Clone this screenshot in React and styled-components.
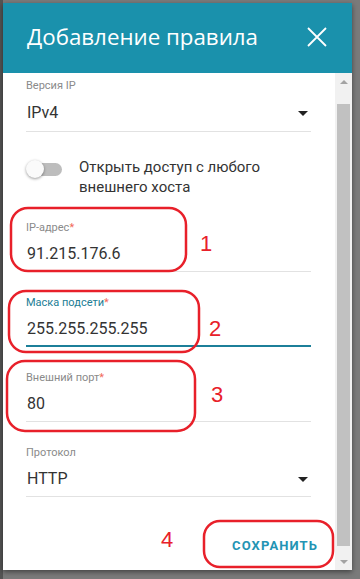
import React from "react";
import styled, { createGlobalStyle } from "styled-components";

const Global = createGlobalStyle`
  html, body { margin: 0; padding: 0; }
  body {
    width: 360px;
    height: 579px;
    overflow: hidden;
    background: #6f6f6f;
    font-family: Roboto, "Noto Sans", sans-serif;
  }
`;

const Page = styled.div`
  position: relative;
  width: 360px;
  height: 579px;
  padding: 3px 8px 9px 3px;
  box-sizing: border-box;
  background: linear-gradient(to right, #545454 0, #545454 3px, #7a7a7a 3px);
`;

const Dialog = styled.div`
  width: 349px;
  height: 567px;
  background: #fff;
  display: flex;
  flex-direction: column;
  box-shadow: 0 2px 5px rgba(0, 0, 0, 0.45);
`;

const Header = styled.div`
  height: 70px;
  flex: none;
  background: #1a91ac;
  display: flex;
  align-items: center;
  justify-content: space-between;
  padding: 0 25px 0 24px;
`;

const Title = styled.div`
  color: #fff;
  font-family: "Open Sans", "Noto Sans", sans-serif;
  font-size: 22.3px;
  line-height: 30px;
  margin-top: -2px;
`;

const CloseBtn = styled.div`
  width: 20px;
  height: 20px;
  display: flex;
  margin-top: -2px;
`;

const Body = styled.div`
  flex: 1;
  display: flex;
  min-height: 0;
`;

const Content = styled.div`
  flex: 1;
  display: flex;
  flex-direction: column;
`;

const Form = styled.div`
  display: flex;
  flex-direction: column;
  gap: 24px;
  padding: 6px 24px 0 23px;
`;

const Field = styled.div`
  display: flex;
  flex-direction: column;
  padding-bottom: ${(p) => (p.$focused ? 6 : p.$tall ? 8 : 7)}px;
  border-bottom: ${(p) => (p.$focused ? "2px solid #1c7f99" : "1px solid #e2e2e2")};
`;

const Label = styled.div`
  font-size: 11px;
  line-height: 14px;
  color: ${(p) => (p.$focused ? "#217d95" : "#8a8a8a")};
`;

const Star = styled.span`
  color: #f26a5a;
`;

const ValueRow = styled.div`
  display: flex;
  align-items: center;
  justify-content: space-between;
  margin-top: ${(p) => (p.$tall ? 10 : 9)}px;
  height: 20px;
`;

const Value = styled.div`
  font-size: 16px;
  line-height: 20px;
  color: #333;
  padding-left: 1px;
`;

const Caret = styled.div`
  width: 0;
  height: 0;
  border-left: 5px solid transparent;
  border-right: 5px solid transparent;
  border-top: 5px solid #222;
  margin-right: 3px;
`;

const ToggleRow = styled.div`
  display: flex;
  align-items: flex-start;
  margin-top: 1px;
`;

const SwitchBox = styled.div`
  width: 52px;
  flex: none;
  padding-top: 3px;
  padding-left: 1px;
`;

const Track = styled.div`
  position: relative;
  width: 35px;
  height: 13px;
  margin-top: 3px;
  border-radius: 7px;
  background: #bdbdbd;
`;

const Knob = styled.div`
  position: absolute;
  left: -1px;
  top: -3px;
  width: 18px;
  height: 18px;
  border-radius: 50%;
  background: #fafafa;
  box-shadow: 0 1px 3px rgba(0, 0, 0, 0.4);
`;

const ToggleText = styled.div`
  font-size: 15px;
  line-height: 20px;
  color: #333;
`;

const Footer = styled.div`
  display: flex;
  justify-content: flex-end;
  padding: 30px 8px 0 0;
`;

const SaveBtn = styled.div`
  height: 36px;
  padding: 0 9px;
  display: flex;
  align-items: center;
  font-size: 13px;
  font-weight: 700;
  letter-spacing: 1.1px;
  color: #2394b4;
  text-transform: uppercase;
`;

const Scrollbar = styled.div`
  width: 17px;
  flex: none;
  background: #f1f1f1;
  display: flex;
  flex-direction: column;
  align-items: center;
`;

const Arrow = styled.div`
  width: 0;
  height: 0;
  border-left: 4px solid transparent;
  border-right: 4px solid transparent;
  ${(p) => (p.$down ? "border-top: 4px solid #a3a3a3;" : "border-bottom: 4px solid #a3a3a3;")}
  margin: ${(p) => (p.$down ? "6px 0 6px" : "7px 0 0")};
`;

const Thumb = styled.div`
  width: 13px;
  flex: 1;
  margin: 20px 0 8px;
  background: #c1c1c1;
`;

const Marks = styled.svg`
  position: absolute;
  left: 0;
  top: 0;
  pointer-events: none;
`;

const Num = styled.span`
  position: absolute;
  left: ${(p) => p.$x}px;
  top: ${(p) => p.$y}px;
  font-family: "Liberation Sans", Arial, sans-serif;
  font-size: 22px;
  line-height: 22px;
  color: #e8202a;
`;

function TextField({ label, value, focused }) {
  return (
    <Field $focused={focused}>
      <Label $focused={focused}>
        {label}
        <Star>*</Star>
      </Label>
      <ValueRow>
        <Value>{value}</Value>
      </ValueRow>
    </Field>
  );
}

function SelectField({ label, value, tall }) {
  return (
    <Field $tall={tall}>
      <Label>{label}</Label>
      <ValueRow $tall={tall}>
        <Value>{value}</Value>
        <Caret />
      </ValueRow>
    </Field>
  );
}

const red = "#e8202a";

export default function App() {
  return (
    <>
      <Global />
      <Page>
        <Dialog>
          <Header>
            <Title>Добавление правила</Title>
            <CloseBtn>
              <svg width="20" height="20" viewBox="0 0 20 20">
                <path d="M1 1 L19 19 M19 1 L1 19" stroke="#fff" strokeWidth="1.8" fill="none" />
              </svg>
            </CloseBtn>
          </Header>
          <Body>
            <Content>
              <Form>
                <SelectField label="Версия IP" value="IPv4" tall />
                <ToggleRow>
                  <SwitchBox>
                    <Track>
                      <Knob />
                    </Track>
                  </SwitchBox>
                  <ToggleText>
                    Открыть доступ с любого
                    <br />
                    внешнего хоста
                  </ToggleText>
                </ToggleRow>
                <TextField label="IP-адрес" value="91.215.176.6" />
                <TextField label="Маска подсети" value="255.255.255.255" focused />
                <TextField label="Внешний порт" value="80" />
                <SelectField label="Протокол" value="HTTP" />
              </Form>
              <Footer>
                <SaveBtn>Сохранить</SaveBtn>
              </Footer>
            </Content>
            <Scrollbar>
              <Arrow />
              <Thumb />
              <Arrow $down />
            </Scrollbar>
          </Body>
        </Dialog>
        <Marks width="360" height="579" viewBox="0 0 360 579">
          <g fill="none" stroke={red} strokeWidth="2.5">
            <rect x="11" y="208" width="175" height="63" rx="17" />
            <rect x="9" y="291" width="190" height="61" rx="17" />
            <rect x="7" y="361" width="188" height="70" rx="18" />
            <rect x="204" y="521" width="129" height="46" rx="16" />
          </g>
        </Marks>
        <Num $x={200} $y={233}>1</Num>
        <Num $x={209} $y={318}>2</Num>
        <Num $x={211} $y={384}>3</Num>
        <Num $x={161} $y={529}>4</Num>
      </Page>
    </>
  );
}
